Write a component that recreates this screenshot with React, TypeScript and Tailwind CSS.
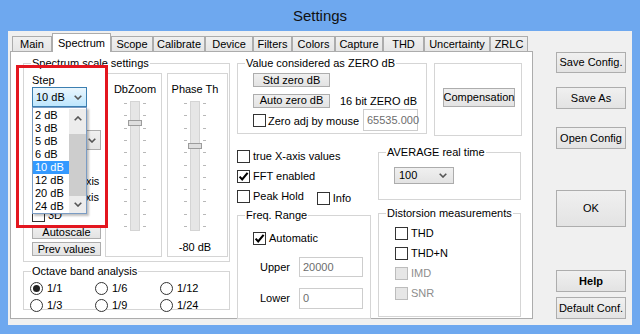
import type { ReactNode } from "react";

type Tab = { label: string; width: string; active?: boolean };

const tabs: Tab[] = [
  { label: "Main", width: "w-[40px]" },
  { label: "Spectrum", width: "w-[59px]", active: true },
  { label: "Scope", width: "w-[42px]" },
  { label: "Calibrate", width: "w-[52px]" },
  { label: "Device", width: "w-[48px]" },
  { label: "Filters", width: "w-[39px]" },
  { label: "Colors", width: "w-[43px]" },
  { label: "Capture", width: "w-[48px]" },
  { label: "THD", width: "w-[41px]" },
  { label: "Uncertainty", width: "w-[66px]" },
  { label: "ZRLC", width: "w-[38px]" },
];

const steps = ["2 dB", "3 dB", "5 dB", "6 dB", "10 dB", "12 dB", "20 dB", "24 dB"];

function Chevron() {
  return (
    <svg width="8" height="5" viewBox="0 0 8 5" className="shrink-0">
      <path d="M0.7 0.7 L4 4 L7.3 0.7" fill="none" stroke="#555" strokeWidth="1.6" />
    </svg>
  );
}

function CheckBox({ checked, disabled }: { checked?: boolean; disabled?: boolean }) {
  return (
    <span
      className={`flex h-[13px] w-[13px] shrink-0 items-center justify-center border ${
        disabled ? "border-[#bcbcbc] bg-[#e6e6e6]" : "border-[#333] bg-white"
      }`}
    >
      {checked && (
        <svg width="11" height="11" viewBox="0 0 11 11">
          <path d="M1.6 5.6 L4.2 8.4 L9.6 1.8" fill="none" stroke="#000" strokeWidth="2.1" />
        </svg>
      )}
    </span>
  );
}

function Check({ label, checked, disabled, className = "" }: { label: string; checked?: boolean; disabled?: boolean; className?: string }) {
  return (
    <div className={`flex h-[13px] items-center ${className}`}>
      <CheckBox checked={checked} disabled={disabled} />
      <span className={`ml-[3px] whitespace-nowrap leading-[13px] ${disabled ? "text-[#8d8d8d]" : ""}`}>{label}</span>
    </div>
  );
}

function Radio({ label, checked }: { label: string; checked?: boolean }) {
  return (
    <div className="flex h-[13px] items-center">
      <span className="flex h-[13px] w-[13px] items-center justify-center rounded-full border border-[#333] bg-white">
        {checked && <span className="h-[7px] w-[7px] rounded-full bg-[#222]" />}
      </span>
      <span className="ml-[4px] leading-[13px]">{label}</span>
    </div>
  );
}

function Button({ children, className = "" }: { children: ReactNode; className?: string }) {
  return (
    <div
      className={`flex items-center justify-center whitespace-nowrap border border-[#adadad] bg-linear-to-b from-[#f0f0f0] to-[#e3e3e3] leading-[13px] ${className}`}
    >
      {children}
    </div>
  );
}

function Group({ label, className, children }: { label?: string; className: string; children?: ReactNode }) {
  return (
    <div className={`relative border border-[#d5d5d5] ${className}`}>
      {label && <span className="absolute -top-[7px] left-[7px] bg-white px-[1px] leading-[13px] whitespace-nowrap">{label}</span>}
      {children}
    </div>
  );
}

function Field({ value, className }: { value: string; className: string }) {
  return <div className={`flex items-center border border-[#cdcdcd] bg-white pl-[3px] text-[#6d6d6d] ${className}`}>{value}</div>;
}

function Slider({ thumb }: { thumb: number }) {
  const ticks = Array.from({ length: 11 }, (_, i) => 2.5 + Math.round(i * 12.3));
  return (
    <svg width="26" height="130" viewBox="0 0 26 130">
      {ticks.map((y) => (
        <g key={y} stroke="#b8b8b8">
          <line x1="2" x2="5" y1={y} y2={y} />
          <line x1="21" x2="24" y1={y} y2={y} />
        </g>
      ))}
      <rect x="8.5" y="0.5" width="9" height="129" fill="#e6e6e6" stroke="#d4d4d4" />
      <rect x="6.5" y={thumb + 0.5} width="13" height="5" fill="#dedede" stroke="#9c9c9c" />
    </svg>
  );
}

export default function App() {
  return (
    <div className="relative flex h-[334px] w-[640px] flex-col bg-[#6ea8ef] font-['Liberation_Sans',Arial,sans-serif] text-[11px] text-black">
      <div className="flex h-[31px] items-center justify-center pt-[1px] text-[15px] text-[#111]">Settings</div>

      <div className="mx-[8px] flex h-[294px] bg-[#f0f0f0]">
        {/* tab control */}
        <div className="ml-[2px] mt-[2px] flex w-[523px] flex-col">
          <div className="flex h-[18px] items-end pl-[2px]">
            {tabs.map((t) =>
              t.active ? (
                <div
                  key={t.label}
                  className={`z-10 -mb-[1px] flex h-[19px] items-start justify-center border border-b-0 border-[#acacac] bg-white pt-[3px] leading-[13px] ${t.width}`}
                >
                  {t.label}
                </div>
              ) : (
                <div
                  key={t.label}
                  className={`flex h-[15px] items-center justify-center border border-b-0 border-[#acacac] bg-linear-to-b from-[#f0f0f0] to-[#e5e5e5] leading-[13px] ${t.width}`}
                >
                  {t.label}
                </div>
              )
            )}
          </div>

          <div className="flex h-[268px] border border-[#acacac] bg-white pl-[12px] pt-[11px]">
            {/* left column */}
            <div className="flex w-[207px] flex-col">
              <Group label="Spectrum scale settings" className="flex h-[199px]">
                <div className="ml-[8px] flex w-[69px] flex-col">
                  <span className="mt-[10px] leading-[13px]">Step</span>
                  <div className="flex h-[20px] w-[55px] items-center justify-between border border-[#3c7fb1] bg-linear-to-b from-[#eaf6fd] to-[#bee6fd] pl-[3px] pr-[4px]">
                    <span>10 dB</span>
                    <Chevron />
                  </div>
                  <div className="mt-[23px] flex h-[20px] w-[69px] items-center justify-end border border-[#acacac] bg-linear-to-b from-[#f0f0f0] to-[#e5e5e5] pr-[4px]">
                    <Chevron />
                  </div>
                  <Check label="Log X axis" className="mt-[25px]" />
                  <Check label="Log Y axis" className="mt-[3px]" />
                  <Check label="3D" className="mt-[5px]" />
                  <Button className="mt-[3px] h-[14px]">Autoscale</Button>
                  <Button className="mt-[3px] h-[14px]">Prev values</Button>
                </div>

                <div className="ml-[4px] mt-[9px] flex h-[184px] w-[57px] flex-col items-center border border-[#d5d5d5] pl-[3px]">
                  <span className="mt-[9px] leading-[13px]">DbZoom</span>
                  <div className="mt-[5px]">
                    <Slider thumb={19} />
                  </div>
                </div>

                <div className="ml-[5px] mt-[9px] flex h-[184px] w-[61px] flex-col items-center border border-[#d5d5d5] pr-[5px]">
                  <span className="mt-[9px] leading-[13px]">Phase Th</span>
                  <div className="mt-[5px]">
                    <Slider thumb={42} />
                  </div>
                  <span className="mt-[10px] leading-[13px]">-80 dB</span>
                </div>
              </Group>

              <Group label="Octave band analysis" className="mt-[9px] h-[39px]">
                <div className="ml-[6px] mt-[10px] grid grid-cols-[65px_65px_65px] gap-y-[4px]">
                  <Radio label="1/1" checked />
                  <Radio label="1/6" />
                  <Radio label="1/12" />
                  <Radio label="1/3" />
                  <Radio label="1/9" />
                  <Radio label="1/24" />
                </div>
              </Group>
            </div>

            {/* right part of the page */}
            <div className="ml-[7px] flex flex-col">
              <div className="flex items-start">
                <Group label="Value considered as ZERO dB" className="flex h-[71px] w-[190px] flex-col">
                  <Button className="ml-[15px] mt-[9px] h-[14px] w-[77px]">Std zero dB</Button>
                  <div className="ml-[15px] mt-[6px] flex items-center">
                    <Button className="h-[14px] w-[77px]">Auto zero dB</Button>
                    <span className="ml-[10px] mt-[2px] leading-[13px]">16 bit ZERO dB</span>
                  </div>
                  <div className="ml-[15px] mt-[1px] flex items-center pr-[8px]">
                    <CheckBox />
                    <span className="ml-[2px] mt-[2px] leading-[13px]">Zero adj by mouse</span>
                    <Field value="65535.000" className="ml-auto h-[22px] w-[55px]" />
                  </div>
                </Group>
                <Group className="ml-[7px] flex h-[73px] w-[88px] justify-center">
                  <Button className="ml-[2px] mt-[24px] h-[19px] w-[72px]">Compensation</Button>
                </Group>
              </div>

              <div className="flex">
                <div className="flex w-[134px] flex-col">
                  <Check label="true X-axis values" className="mt-[14px]" />
                  <Check label="FFT enabled" checked className="mt-[7px]" />
                  <div className="mt-[7px] flex">
                    <Check label="Peak Hold" />
                    <Check label="Info" className="ml-[13px] mt-[2px]" />
                  </div>
                  <Group label="Freq. Range" className="mt-[10px] flex h-[104px] flex-col">
                    <Check label="Automatic" checked className="ml-[15px] mt-[16px]" />
                    <div className="ml-[22px] mt-[12px] flex items-center">
                      <span className="w-[39px] leading-[13px]">Upper</span>
                      <Field value="20000" className="h-[20px] w-[64px]" />
                    </div>
                    <div className="ml-[22px] mt-[11px] flex items-center">
                      <span className="w-[39px] leading-[13px]">Lower</span>
                      <Field value="0" className="h-[21px] w-[64px]" />
                    </div>
                  </Group>
                </div>

                <div className="ml-[7px] flex w-[143px] flex-col">
                  <Group label="AVERAGE real time" className="mt-[16px] h-[48px]">
                    <div className="ml-[15px] mt-[14px] flex h-[17px] w-[60px] items-center justify-between border border-[#acacac] bg-linear-to-b from-[#f0f0f0] to-[#e3e3e3] pl-[4px] pr-[6px]">
                      <span>100</span>
                      <Chevron />
                    </div>
                  </Group>
                  <Group label="Distorsion measurements" className="mt-[13px] flex h-[104px] flex-col">
                    <Check label="THD" className="ml-[16px] mt-[13px]" />
                    <Check label="THD+N" className="ml-[16px] mt-[7px]" />
                    <Check label="IMD" disabled className="ml-[16px] mt-[7px]" />
                    <Check label="SNR" disabled className="ml-[16px] mt-[7px]" />
                  </Group>
                </div>
              </div>
            </div>
          </div>
        </div>

        {/* dialog buttons */}
        <div className="ml-[23px] flex w-[70px] flex-col">
          <Button className="mt-[21px] h-[21px]">Save Config.</Button>
          <Button className="mt-[14px] h-[22px]">Save As</Button>
          <Button className="mt-[18px] h-[22px]">Open Config</Button>
          <Button className="mt-[41px] h-[37px]">OK</Button>
          <Button className="mt-[43px] h-[22px] font-bold">Help</Button>
          <Button className="mt-[5px] h-[22px]">Default Conf.</Button>
        </div>
      </div>

      {/* open dropdown list of the Step combo */}
      <div className="absolute left-[32px] top-[107px] flex h-[107px] w-[55px] border border-[#7a9cc4] bg-white pt-[1px] shadow-[2px_2px_2px_rgba(0,0,0,0.25)]">
        <div className="flex w-[36px] flex-col">
          {steps.map((s) => (
            <div key={s} className={`h-[13px] pl-[2px] leading-[13px] ${s === "10 dB" ? "bg-[#3399ff] text-white" : ""}`}>
              {s}
            </div>
          ))}
        </div>
        <div className="flex w-[17px] flex-col items-center bg-[#ececec]">
          <svg width="8" height="5" viewBox="0 0 8 5" className="mt-[7px]">
            <path d="M0.7 4.3 L4 1 L7.3 4.3" fill="none" stroke="#555" strokeWidth="1.6" />
          </svg>
          <div className="mt-[13px] h-[62px] w-[17px] bg-[#cdcdcd]" />
          <div className="mt-[6px]">
            <Chevron />
          </div>
        </div>
      </div>

      {/* red highlight */}
      <div className="absolute left-[16px] top-[65px] h-[163px] w-[92px] border-[3px] border-[#e3161f]" />
    </div>
  );
}
